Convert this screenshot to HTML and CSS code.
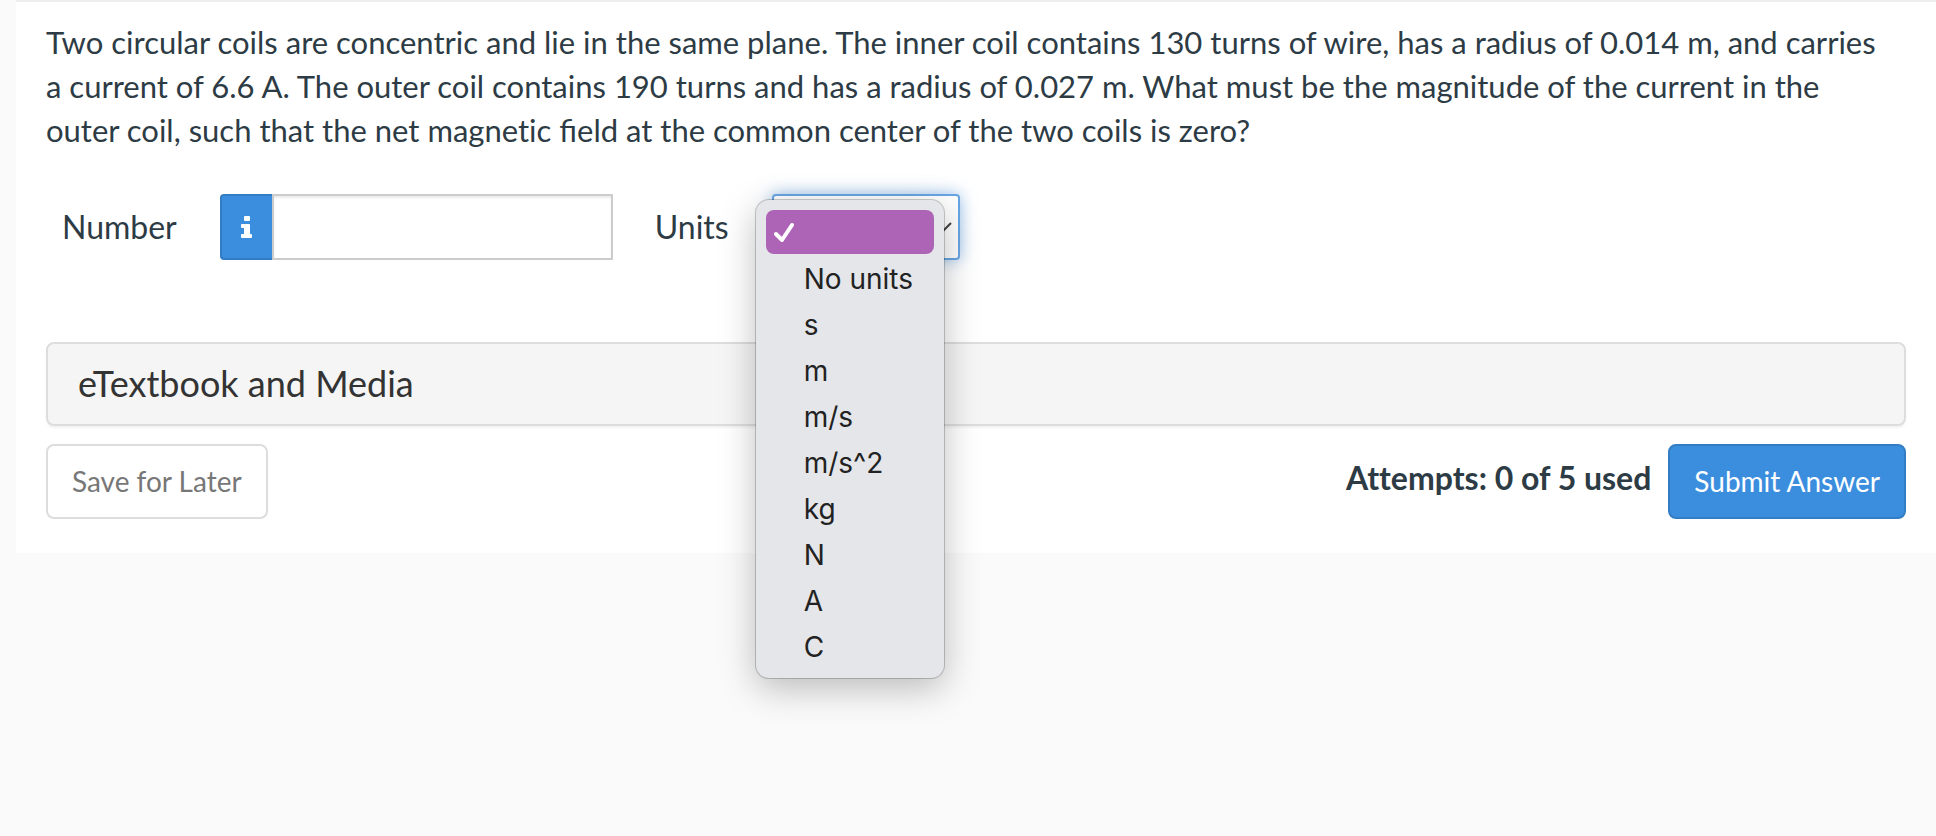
FILE: index.html
```html
<!DOCTYPE html>
<html lang="en">
<head>
<meta charset="utf-8">
<title>Question</title>
<link rel="stylesheet" href="styles.css">
</head>
<body>
<main class="question">
  <p class="prompt">Two circular coils are concentric and lie in the same plane. The inner coil contains 130 turns of wire, has a radius of 0.014 m, and carries<br>a current of 6.6 A. The outer coil contains 190 turns and has a radius of 0.027 m. What must be the magnitude of the current in the<br>outer coil, such that the net magnetic <span class="joined">field</span> at the common center of the two coils is zero?</p>
  <form class="answer">
    <div class="fields">
      <label class="number-label" for="number">Number</label>
      <div class="number-group">
        <button class="info" type="button" aria-label="Information">
          <svg width="12" height="24" viewBox="0 0 12 24" aria-hidden="true"><path fill="#fff" d="M4 1h4q1 0 1 1v3q0 1-1 1H4q-1 0-1-1V2q0-1 1-1zM1 9h7q1 0 1 1v9h1q1 0 1 1v2q0 1-1 1H1q-1 0-1-1v-2q0-1 1-1h2v-6H1q-1 0-1-1v-2q0-1 1-1z"/></svg>
        </button>
        <input class="number" id="number" type="text">
      </div>
      <label class="units-label" for="units">Units</label>
      <div class="units-group">
        <select class="units" id="units">
          <option selected></option>
          <option>No units</option>
          <option>s</option>
          <option>m</option>
          <option>m/s</option>
          <option>m/s^2</option>
          <option>kg</option>
          <option>N</option>
          <option>A</option>
          <option>C</option>
        </select>
        <svg class="chevron" width="16" height="10" viewBox="0 0 16 10" aria-hidden="true"><path d="M1 1l7 7 7-7" fill="none" stroke="#444" stroke-width="2"/></svg>
        <ul class="menu" role="listbox" aria-label="Units">
          <li class="option selected" role="option" aria-selected="true"><svg width="20" height="20" viewBox="0 0 20 20" aria-hidden="true"><path d="M2 12l6 6L18 3" fill="none" stroke="#fff" stroke-width="4" stroke-linecap="round" stroke-linejoin="round"/></svg></li>
          <li class="option" role="option">No units</li>
          <li class="option" role="option">s</li>
          <li class="option" role="option">m</li>
          <li class="option" role="option">m/s</li>
          <li class="option" role="option">m/s^2</li>
          <li class="option" role="option">kg</li>
          <li class="option" role="option">N</li>
          <li class="option" role="option">A</li>
          <li class="option" role="option">C</li>
        </ul>
      </div>
    </div>
    <button class="resources" type="button">eTextbook and Media</button>
    <div class="actions">
      <button class="button save" type="button">Save for Later</button>
      <strong class="attempts">Attempts: 0 of 5 used</strong>
      <button class="button submit" type="submit">Submit Answer</button>
    </div>
  </form>
</main>
</body>
</html>
```
FILE: styles.css
```css
* {
  box-sizing: border-box;
}

body {
  min-height: 100vh;
  margin: 0;
  background: #fafafa;
  color: #2d3b45;
  font-family: Lato, sans-serif;
  font-size: 32px;
  font-variant-ligatures: none;
  line-height: 44px;
}

button,
input,
select {
  margin: 0;
  font: inherit;
}

.question {
  margin-left: 16px;
  padding: 18px 30px 34px;
  border-top: 2px solid #eee;
  background: #fff;
}

.prompt {
  margin: 0 0 42px;
  font-size: 31px;
}

.joined {
  font-variant-ligatures: normal;
}

.fields {
  display: flex;
  align-items: center;
  margin-bottom: 82px;
  padding-left: 16px;
}

.number-group {
  display: flex;
  margin: 0 42px 0 43px;
}

.info {
  display: flex;
  align-items: center;
  justify-content: center;
  width: 52px;
  height: 66px;
  padding: 0;
  border: 2px solid #327dc4;
  border-right: 0;
  border-radius: 4px 0 0 4px;
  background: #3b8ede;
}

.number {
  width: 341px;
  height: 66px;
  padding: 8px 16px;
  border: 2px solid #ccc;
  border-radius: 0;
  background: #fff;
  box-shadow: inset 0 2px 2px rgba(0, 0, 0, 0.08);
}

.units-group {
  position: relative;
  margin-left: 43px;
}

.units {
  display: block;
  width: 188px;
  height: 66px;
  border: 2px solid #68a6e4;
  border-radius: 4px;
  outline: 0;
  appearance: none;
  background: #fff;
  box-shadow: 0 0 16px rgba(82, 152, 224, 0.6);
}

.chevron {
  position: absolute;
  top: 28px;
  right: 8px;
}

.menu {
  position: absolute;
  top: 6px;
  left: -16px;
  z-index: 1;
  width: 188px;
  margin: 0;
  padding: 10px 10px 8px;
  border-radius: 13px;
  background: #e5e6ea;
  box-shadow: 0 0 0 1px rgba(0, 0, 0, 0.2), 0 10px 36px rgba(0, 0, 0, 0.26);
  color: #222;
  font-family: Inter, sans-serif;
  font-size: 28px;
  list-style: none;
}

.option {
  height: 46px;
  padding-left: 38px;
  line-height: 46px;
  white-space: nowrap;
}

.selected {
  display: flex;
  align-items: center;
  height: 44px;
  margin-bottom: 2px;
  padding-left: 8px;
  border-radius: 8px;
  background: #ad64b6;
}

.resources {
  display: block;
  width: 100%;
  height: 84px;
  padding: 0 30px 2px;
  border: 2px solid #ddd;
  border-radius: 8px;
  background: #f5f5f5;
  box-shadow: 0 2px 2px rgba(0, 0, 0, 0.05);
  color: #333;
  font-size: 36px;
  text-align: left;
}

.actions {
  display: flex;
  align-items: center;
  gap: 17px;
  margin-top: 18px;
}

.button {
  height: 75px;
  padding: 0 24px 2px;
  border: 2px solid #ddd;
  border-radius: 8px;
  font-size: 28px;
}

.save {
  background: #fff;
  color: #777;
}

.attempts {
  margin-left: auto;
  padding-bottom: 8px;
}

.submit {
  border-color: #327dc4;
  background: #3b8ede;
  color: #fff;
}
```
